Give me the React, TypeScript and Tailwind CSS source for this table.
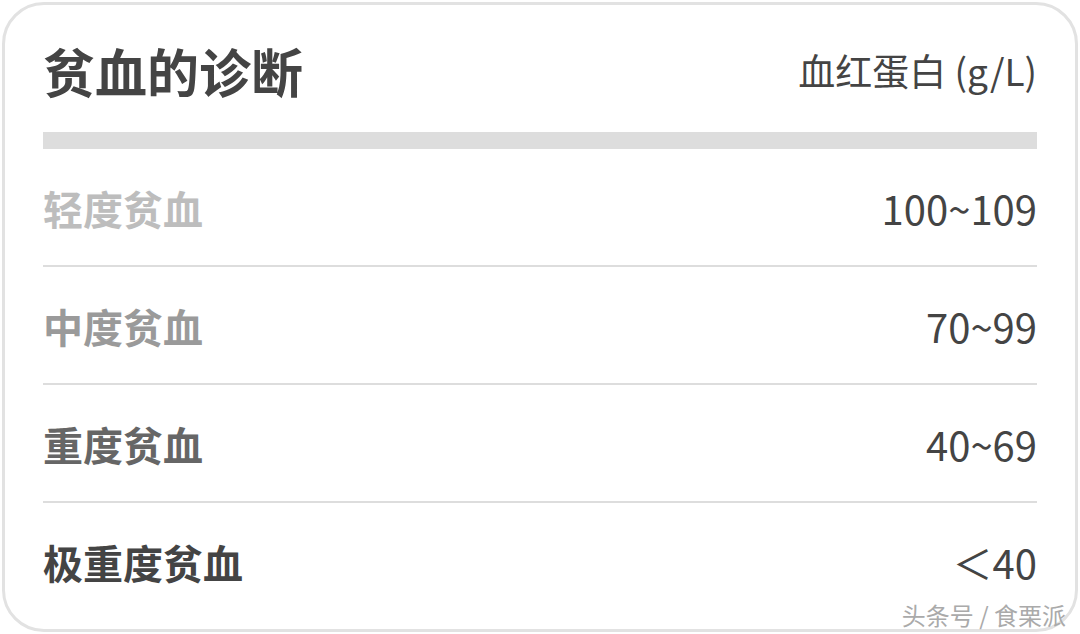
import React from "react";

const rows = [
  { label: "轻度贫血", value: "100~109", color: "text-[#bdbdbd]" },
  { label: "中度贫血", value: "70~99", color: "text-[#9a9a9a]" },
  { label: "重度贫血", value: "40~69", color: "text-[#666666]" },
  { label: "极重度贫血", value: "＜40", color: "text-[#444444]" },
];

export default function App() {
  return (
    <div
      className="relative w-[1080px] h-[634px] bg-white p-[2px]"
      style={{ fontFamily: '"Noto Sans CJK SC", "Noto Sans", sans-serif' }}
    >
      <div className="h-full border-[3px] border-[#e2e2e2] rounded-[42px] px-[38px] flex flex-col">
        <div className="h-[127px] flex items-center justify-between pt-[4px]">
          <div className="text-[52px] font-bold text-[#444] leading-none">贫血的诊断</div>
          <div className="text-[37px] text-[#444] leading-none">血红蛋白 (g/L)</div>
        </div>
        <div className="h-[17px] bg-[#dddddd]" />
        {rows.map((r, i) => (
          <div key={r.label} className="flex flex-col">
            <div className="h-[116px] flex items-center justify-between pt-[1px]">
              <div className={`text-[40px] font-bold leading-none ${r.color}`}>{r.label}</div>
              <div className="text-[40px] text-[#444] leading-none">{r.value}</div>
            </div>
            {i < rows.length - 1 && <div className="h-[2px] bg-[#dddddd]" />}
          </div>
        ))}
      </div>
      <div className="absolute right-[14px] bottom-[7px] text-[24px] text-[#aaaaaa] leading-none">
        头条号 / 食栗派
      </div>
    </div>
  );
}
